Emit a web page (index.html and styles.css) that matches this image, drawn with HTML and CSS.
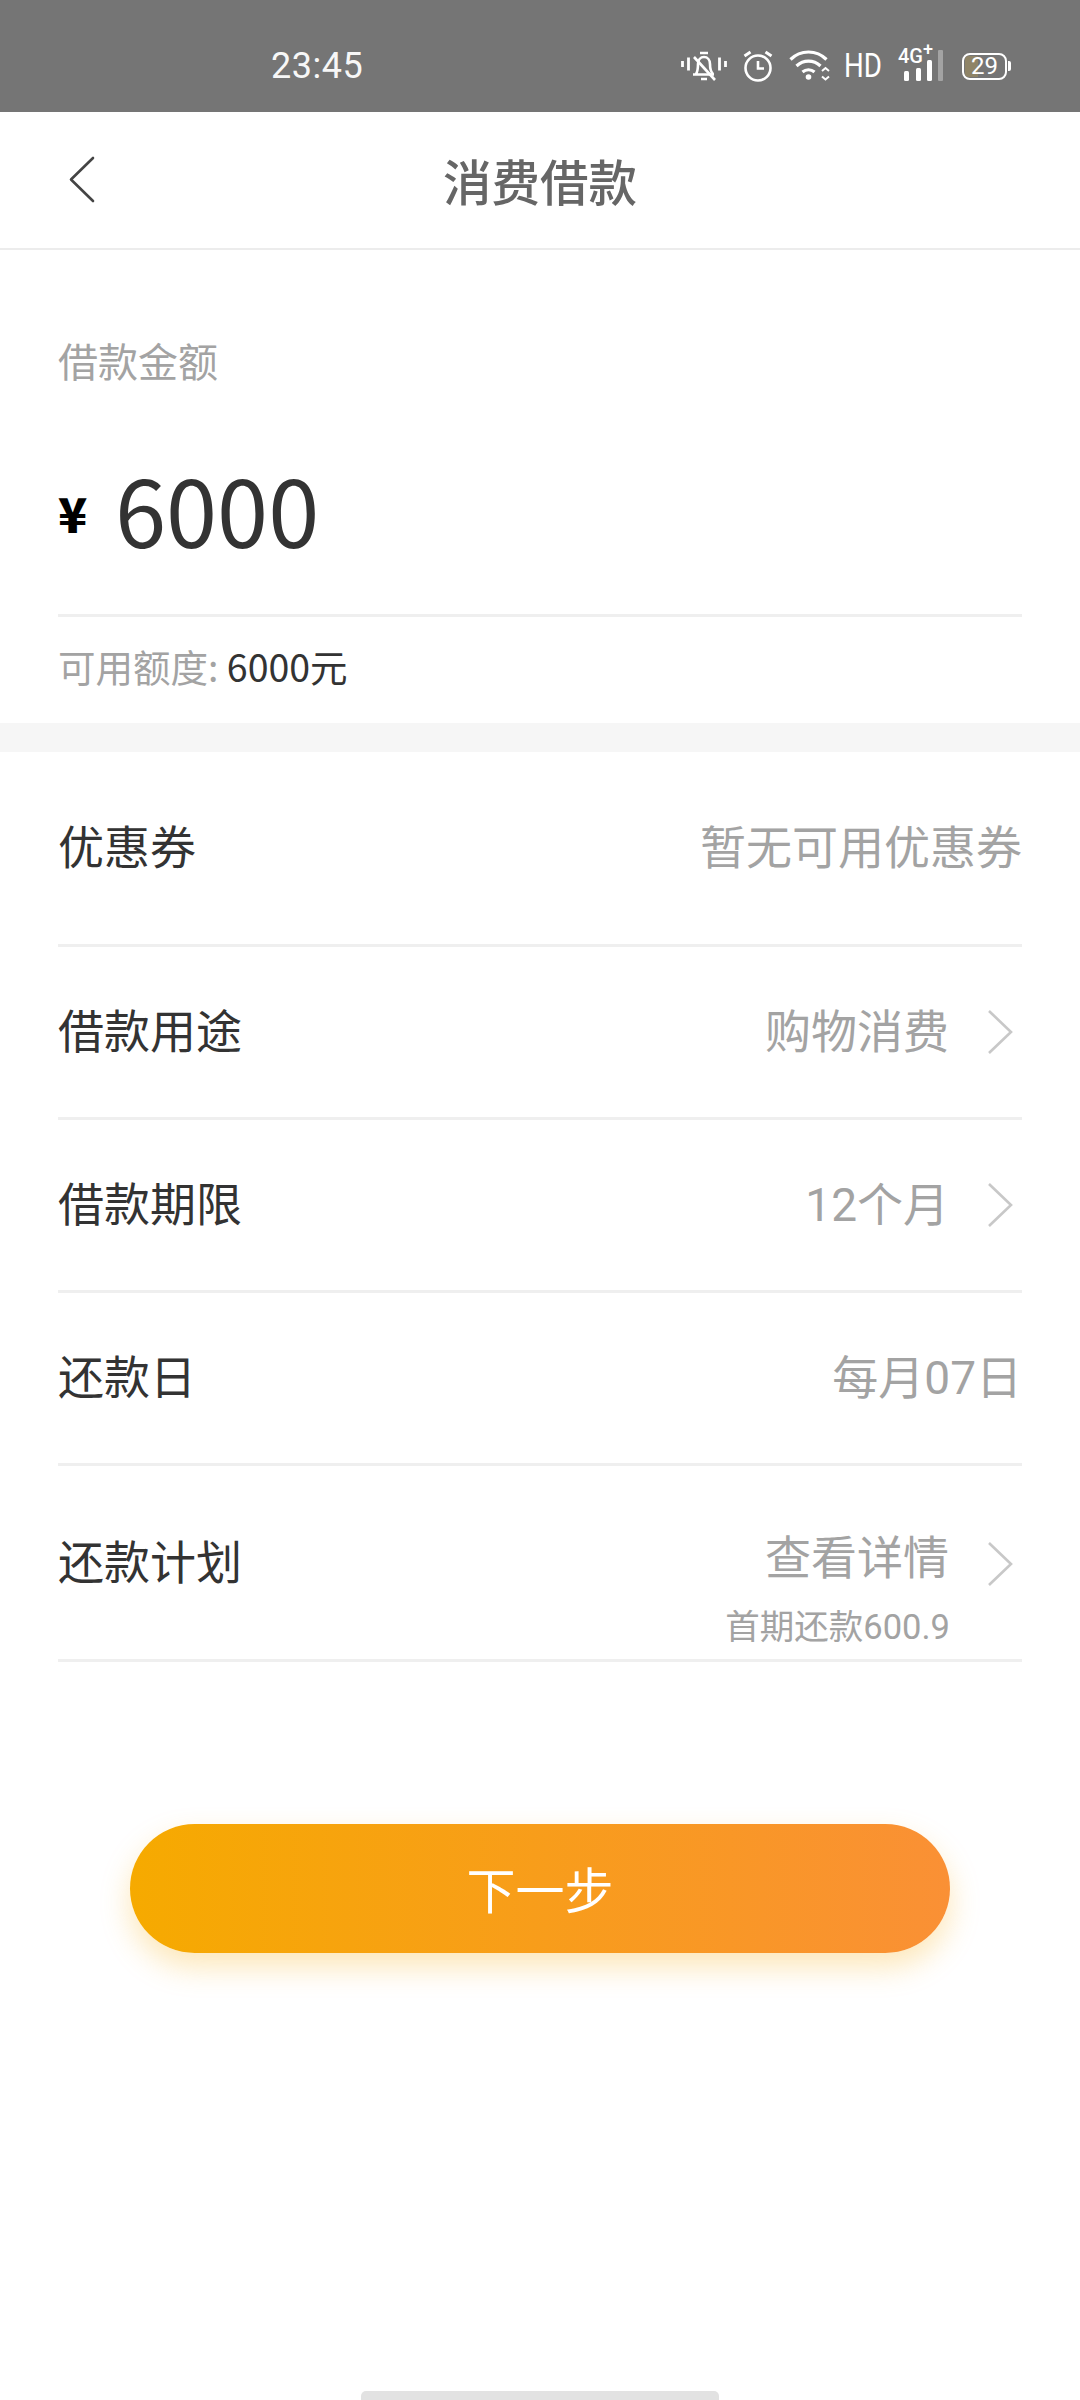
FILE: index.html
```html
<!DOCTYPE html>
<html lang="zh-CN">
<head>
    <meta charset="UTF-8">
    <meta name="viewport" content="width=device-width, initial-scale=1.0">
    <title>消费借款</title>
    <link rel="stylesheet" href="styles.css">
</head>
<body>
    <div class="status-bar">
        <span class="status-time">23:45</span>
        <div class="status-icons">
            <svg class="icon-bell" width="46" height="32" viewBox="0 0 46 32" fill="none" stroke="#fff" stroke-width="2.6">
                <path d="M1.5 11v6M7.5 7.5v13M38.5 7.5v13M44.5 11v6" stroke-width="2.8"/>
                <path d="M12 24.5h21M15 24c2-3 2-6 2-10 0-4 2.500-7 6-7 3.500 0 6 3 6 7 0 4 0 7 3 10"/>
                <path d="M19 3h8M13 7l21 23M20 29h6"/>
            </svg>
            <svg class="icon-alarm" width="32" height="32" viewBox="0 0 32 32" fill="none" stroke="#fff">
                <circle cx="16" cy="18" r="12.500" stroke-width="2.600"/>
                <path d="M16 11v7.500h6" stroke-width="2.600"/>
                <path d="M2.500 6l6-4M29.500 6l-6-4" stroke-width="3"/>
            </svg>
            <svg class="icon-wifi" width="42" height="32" viewBox="0 0 42 32" fill="none" stroke="#fff" stroke-width="3.200">
                <path d="M1.500 9.500c10-10 26-10 36 0M7.500 16c7-6.500 17-6.500 24 0M13.500 22c3.500-3 8.500-3 12 0"/>
                <circle cx="19.500" cy="27" r="2.800" fill="#fff" stroke="none"/>
                <path d="M33 21l3.500-3 3.500 3M33 26.500l3.500 3 3.500-3" stroke-width="2"/>
            </svg>
            <span class="status-hd">HD</span>
            <div class="net">
                <span class="net-label">4G<sup>+</sup></span>
                <svg class="net-bars" width="46" height="32" viewBox="0 0 46 32" fill="#fff">
                    <rect x="6" y="21" width="5" height="10" rx="1.500"/>
                    <rect x="18" y="18" width="5" height="13" rx="1.500"/>
                    <rect x="29" y="10" width="5" height="21" rx="1.500"/>
                    <rect x="40" y="0" width="5" height="31" rx="1" fill="#a3a3a3"/>
                </svg>
            </div>
            <div class="battery">
                <span class="battery-fill"></span>
                <span class="battery-num">29</span>
            </div>
        </div>
    </div>

    <header class="nav-bar">
        <svg class="back-icon" width="27" height="47" viewBox="0 0 27 47" fill="none">
            <path d="M25 2L3 23.500 25 45" stroke="#444" stroke-width="2.600" stroke-linecap="round" stroke-linejoin="round"/>
        </svg>
        <h1 class="nav-title">消费借款</h1>
    </header>

    <section class="amount-section">
        <div class="amount-label">借款金额</div>
        <div class="amount-row">
            <span class="amount-unit">¥</span>
            <span class="amount-value">6000</span>
        </div>
        <div class="amount-credit">可用额度: <span class="credit-value">6000元</span></div>
    </section>

    <div class="band"></div>

    <section class="form-list">
        <div class="form-row row-first">
            <span class="row-label">优惠券</span>
            <span class="row-value">暂无可用优惠券</span>
        </div>
        <div class="form-row">
            <span class="row-label">借款用途</span>
            <span class="row-value">购物消费</span>
            <svg class="chevron" width="26" height="46" viewBox="0 0 26 46" fill="none"><path d="M2 2l22 21L2 44" stroke="#c8c8c8" stroke-width="2.600"/></svg>
        </div>
        <div class="form-row">
            <span class="row-label">借款期限</span>
            <span class="row-value">12个月</span>
            <svg class="chevron" width="26" height="46" viewBox="0 0 26 46" fill="none"><path d="M2 2l22 21L2 44" stroke="#c8c8c8" stroke-width="2.600"/></svg>
        </div>
        <div class="form-row">
            <span class="row-label">还款日</span>
            <span class="row-value">每月07日</span>
        </div>
        <div class="form-row row-plan">
            <span class="row-label">还款计划</span>
            <div class="plan-right">
                <div class="plan-top">
                    <span class="row-value">查看详情</span>
                    <svg class="chevron" width="26" height="46" viewBox="0 0 26 46" fill="none"><path d="M2 2l22 21L2 44" stroke="#c8c8c8" stroke-width="2.600"/></svg>
                </div>
                <div class="plan-sub">首期还款600.9</div>
            </div>
        </div>
    </section>

    <button class="next-btn" type="button">下一步</button>

    <div class="home-indicator"></div>
</body>
</html>
```

FILE: styles.css
```css
/* General Reset */
html, body {
    margin: 0;
    padding: 0;
}

body {
    position: relative;
    width: 1080px;
    height: 2400px;
    overflow: hidden;
    background-color: #fff;
    color: #333;
    font-family: "Noto Sans CJK SC", "Noto Sans", sans-serif;
}

/* Status bar */
.status-bar {
    display: flex;
    align-items: center;
    justify-content: space-between;
    height: 112px;
    padding: 20px 73px 0 271px;
    box-sizing: border-box;
    background-color: #757575;
    color: #fff;
}

.status-time {
    font-family: Roboto, sans-serif;
    font-size: 36px;
    letter-spacing: 0.5px;
    opacity: 0.95;
}

.status-icons {
    display: flex;
    align-items: center;
}

.icon-bell,
.icon-alarm {
    margin-right: 15px;
}

.icon-wifi {
    margin-right: 13px;
}

.status-hd {
    display: inline-block;
    width: 37px;
    margin-right: 17px;
    font-family: Roboto, sans-serif;
    font-size: 33px;
    line-height: 36px;
    transform: scaleX(0.84);
    transform-origin: left center;
}

.net {
    position: relative;
    width: 46px;
    height: 32px;
    margin-right: 18px;
}

.net-label {
    position: absolute;
    left: 0;
    top: -5px;
    font-family: Roboto, sans-serif;
    font-size: 20px;
    font-weight: 500;
    line-height: 22px;
}

.net-label sup {
    font-size: 18px;
    line-height: 0;
}

.battery {
    position: relative;
    display: flex;
    align-items: center;
    justify-content: center;
    width: 45px;
    height: 27px;
    border: 2.5px solid #fff;
    border-radius: 8px;
    box-sizing: border-box;
}

.battery::after {
    content: "";
    position: absolute;
    right: -6px;
    top: 6px;
    width: 3px;
    height: 10px;
    border-radius: 0 2px 2px 0;
    background-color: #fff;
}

.battery-fill {
    position: absolute;
    left: 1px;
    top: 1px;
    bottom: 1px;
    width: 13px;
    border-radius: 4px 0 0 4px;
    background-color: #8f8467;
}

.battery-num {
    position: relative;
    font-family: Roboto, sans-serif;
    font-size: 24px;
    line-height: 22px;
}

/* Nav bar */
.nav-bar {
    display: flex;
    align-items: center;
    justify-content: center;
    position: relative;
    height: 138px;
    box-sizing: border-box;
    border-bottom: 2px solid #ececec;
}

.back-icon {
    position: absolute;
    left: 68px;
    top: 44px;
}

.nav-title {
    margin: 0;
    font-size: 48.5px;
    font-weight: 500;
    line-height: 70px;
    color: #666;
}

/* Amount */
.amount-section {
    padding: 80px 58px 32px;
}

.amount-label {
    font-size: 40px;
    line-height: 60px;
    color: #a3a3a3;
}

.amount-row {
    display: flex;
    align-items: center;
    height: 120px;
    margin-top: 58px;
    padding-bottom: 46px;
    border-bottom: 3px solid #efefef;
}

.amount-unit {
    width: 57px;
    margin-top: 8px;
    font-size: 48px;
    font-weight: 900;
    line-height: 60px;
    color: #000;
}

.amount-value {
    font-size: 92px;
    line-height: 120px;
    color: #333;
}

.amount-credit {
    margin-top: 24px;
    font-size: 37.5px;
    line-height: 50px;
    color: #a3a3a3;
}

.credit-value {
    color: #333;
}

.band {
    height: 29px;
    background-color: #f6f6f6;
}

/* Form rows */
.form-list {
    padding: 0 58px;
}

.form-row {
    display: flex;
    align-items: center;
    height: 173px;
    box-sizing: border-box;
    border-bottom: 3px solid #efefef;
}

.row-first {
    height: 195px;
}

.row-label {
    flex: 1;
    margin-bottom: 8px;
    font-size: 46px;
    color: #333;
}

.row-value {
    margin-bottom: 8px;
    font-family: Roboto, "Noto Sans CJK SC", sans-serif;
    font-size: 46px;
    color: #a3a3a3;
}

.chevron {
    margin-left: 38px;
    margin-right: 9px;
}

.row-plan {
    align-items: flex-start;
    height: 196px;
    padding-top: 62px;
}

.row-plan .row-label {
    margin-top: -3px;
    line-height: 68px;
}

.plan-top .row-value {
    line-height: 68px;
}

.plan-top .chevron {
    margin-top: 3px;
}

.plan-right {
    display: flex;
    flex-direction: column;
    align-items: flex-end;
}

.plan-top {
    display: flex;
    align-items: center;
    height: 68px;
}

.plan-sub {
    margin-top: 9px;
    margin-right: 72px;
    font-family: Roboto, "Noto Sans CJK SC", sans-serif;
    font-size: 34.5px;
    line-height: 44px;
    color: #a3a3a3;
}

/* Button */
.next-btn {
    display: block;
    width: 820px;
    height: 129px;
    margin: 162px auto 0;
    padding: 0 0 3px;
    border: none;
    border-radius: 65px;
    background: linear-gradient(90deg, #f6aa00, #fa9035);
    box-shadow: 0 14px 30px rgba(247, 170, 0, 0.28);
    color: #fff;
    font-family: inherit;
    font-size: 49px;
}

.home-indicator {
    position: absolute;
    left: 361px;
    bottom: 0;
    width: 358px;
    height: 9px;
    border-radius: 5px 5px 0 0;
    background-color: #e2e2e2;
}
```
